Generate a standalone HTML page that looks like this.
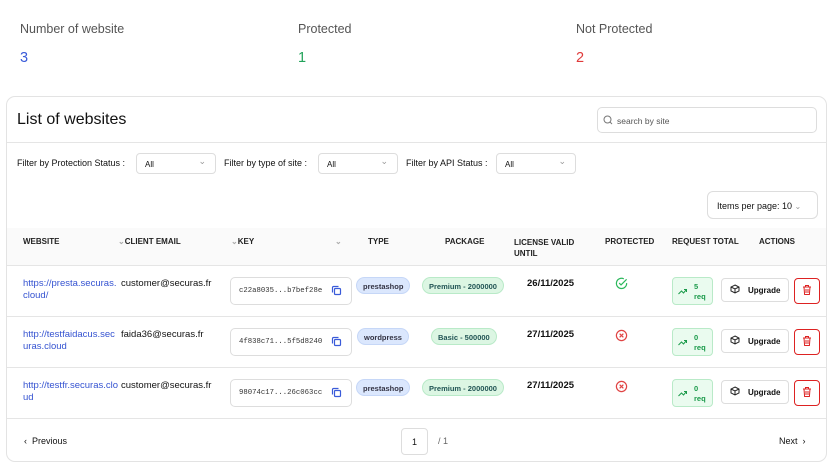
<!DOCTYPE html>
<html><head><meta charset="utf-8"><style>
*{box-sizing:border-box;margin:0;padding:0}
body{width:837px;height:468px;background:#fff;font-family:"Liberation Sans",sans-serif;color:#111;position:relative;overflow:hidden}
.a{position:absolute;white-space:nowrap}
.lbl{font-size:12.5px;color:#555}
.num{font-size:14.5px}
.card{position:absolute;left:6px;top:96px;width:821px;height:366px;border:1px solid #e3e3e3;border-radius:9px}
.sel{position:absolute;height:21px;border:1px solid #ddd;border-radius:4px;font-size:8px;padding:6px 8px}
.sel:after{content:"⌄";position:absolute;right:9px;top:2px;color:#999;font-size:9px}
.fl{font-size:9px}
.th{font-size:8px;font-weight:bold;color:#222}
.line{position:absolute;left:7px;width:819px;height:1px;background:#e5e5e5}
.link{font-size:9.5px;color:#3553d1;line-height:12px}
.em{font-size:9.5px;line-height:12px}
.key{position:absolute;left:230px;width:122px;height:28px;border:1px solid #ddd;border-radius:5px;font-family:"Liberation Mono",monospace;font-size:7.3px;padding:9px 0 0 8px;color:#333}
.pill{position:absolute;height:17px;border-radius:9px;font-size:7.5px;padding:4px 6px;font-weight:bold}
.blue{background:#dbe7fd;border:1px solid #c6d7f7;color:#334}
.green{background:#dcf6e3;border:1px solid #b9eac8;color:#255}
.date{font-size:9.5px;font-weight:bold}
.req{position:absolute;left:672px;width:41px;height:28px;background:#eafbef;border:1px solid #b9eac8;border-radius:4px;font-size:7px;color:#1a9a4a;font-weight:bold}
.up{position:absolute;left:721px;width:68px;height:24px;border:1px solid #ddd;border-radius:4px;font-size:8px;font-weight:bold;padding:7px 0 0 26px}
.del{position:absolute;left:794px;width:26px;height:26px;border:1.3px solid #d22;border-radius:4px}
</style></head><body>
<div class="a lbl" style="left:20px;top:22px">Number of website</div>
<div class="a num" style="left:20px;top:50px;color:#3a5bd9">3</div>
<div class="a lbl" style="left:298px;top:22px">Protected</div>
<div class="a num" style="left:298px;top:50px;color:#22a35a">1</div>
<div class="a lbl" style="left:576px;top:22px">Not Protected</div>
<div class="a num" style="left:576px;top:50px;color:#e03a3a">2</div>

<div class="card"></div>
<div class="a" style="left:17px;top:111px;font-size:16px;color:#111">List of websites</div>
<div class="a" style="left:597px;top:107px;width:220px;height:26px;border:1px solid #ddd;border-radius:5px;font-size:8.5px;color:#555;padding:8px 0 0 19px">search by site
<svg style="position:absolute;left:5px;top:7px" width="10" height="10" viewBox="0 0 10 10"><circle cx="4.5" cy="4.5" r="3.5" fill="none" stroke="#777" stroke-width="1"/><path d="M7 7l2 2" stroke="#777"/></svg></div>
<div class="line" style="top:142px"></div>

<div class="a fl" style="left:17px;top:158px">Filter by Protection Status :</div>
<div class="sel" style="left:136px;top:153px;width:80px">All</div>
<div class="a fl" style="left:224px;top:158px">Filter by type of site :</div>
<div class="sel" style="left:318px;top:153px;width:80px">All</div>
<div class="a fl" style="left:406px;top:158px">Filter by API Status :</div>
<div class="sel" style="left:496px;top:153px;width:80px">All</div>

<div class="a" style="left:707px;top:191px;width:111px;height:28px;border:1px solid #ddd;border-radius:6px;font-size:9px;padding:9px 0 0 9px">Items per page: 10 <span style="color:#999;font-size:8px">⌄</span></div>

<div class="a" style="left:7px;top:228px;width:819px;height:37px;background:#fafafa"></div>
<div class="a th" style="left:23px;top:237px">WEBSITE</div>
<div class="a th" style="left:118px;top:237px"><span style="color:#aaa">⌄</span>CLIENT EMAIL</div>
<div class="a th" style="left:231px;top:237px"><span style="color:#aaa">⌄</span>KEY</div>
<div class="a th" style="left:335px;top:237px;color:#aaa">⌄</div>
<div class="a th" style="left:368px;top:237px">TYPE</div>
<div class="a th" style="left:445px;top:237px">PACKAGE</div>
<div class="a th" style="left:514px;top:237px;line-height:11px">LICENSE VALID<br>UNTIL</div>
<div class="a th" style="left:605px;top:237px">PROTECTED</div>
<div class="a th" style="left:672px;top:237px">REQUEST TOTAL</div>
<div class="a th" style="left:759px;top:237px">ACTIONS</div>
<div class="line" style="top:265px"></div>
<div class="line" style="top:316px"></div>
<div class="line" style="top:367px"></div>
<div class="line" style="top:418px"></div>

<div class="a link" style="left:23px;top:278px">https://presta.securas.<br>cloud/</div>
<div class="a em" style="left:121px;top:278px">customer@securas.fr</div>
<div class="key" style="top:277px">c22a8035...b7bef28e</div>
<div class="pill blue" style="left:356px;top:277px">prestashop</div>
<div class="pill green" style="left:422px;top:277px">Premium - 2000000</div>
<div class="a date" style="left:527px;top:278px">26/11/2025</div>
<svg class="a" style="left:615px;top:277px" width="13" height="13" viewBox="0 0 14 14"><path d="M12.5 6.5A5.5 5.5 0 1 1 9.5 2" fill="none" stroke="#2cb85c" stroke-width="1.3"/><path d="M4.5 6.5l2 2 6-6" fill="none" stroke="#2cb85c" stroke-width="1.3"/></svg>
<div class="req" style="top:277px"></div>
<div class="up" style="top:278px">Upgrade</div>
<div class="del" style="top:278px"></div>

<div class="a link" style="left:23px;top:329px">http://testfaidacus.sec<br>uras.cloud</div>
<div class="a em" style="left:121px;top:329px">faida36@securas.fr</div>
<div class="key" style="top:328px">4f838c71...5f5d8240</div>
<div class="pill blue" style="left:357px;top:328px">wordpress</div>
<div class="pill green" style="left:431px;top:328px">Basic - 500000</div>
<div class="a date" style="left:527px;top:329px">27/11/2025</div>
<div class="req" style="top:328px"></div>
<div class="up" style="top:329px">Upgrade</div>
<div class="del" style="top:329px"></div>

<div class="a link" style="left:23px;top:380px">http://testfr.securas.clo<br>ud</div>
<div class="a em" style="left:121px;top:380px">customer@securas.fr</div>
<div class="key" style="top:379px">98074c17...26c063cc</div>
<div class="pill blue" style="left:356px;top:379px">prestashop</div>
<div class="pill green" style="left:422px;top:379px">Premium - 2000000</div>
<div class="a date" style="left:527px;top:380px">27/11/2025</div>
<div class="req" style="top:379px"></div>
<div class="up" style="top:380px">Upgrade</div>
<div class="del" style="top:380px"></div>

<div class="a" style="left:24px;top:436px;font-size:9px">‹ &nbsp;Previous</div>
<div class="a" style="left:401px;top:428px;width:27px;height:27px;border:1px solid #ddd;border-radius:4px;font-size:9px;text-align:center;padding-top:8px">1</div>
<div class="a" style="left:438px;top:436px;font-size:9px;color:#666">/ 1</div>
<div class="a" style="left:779px;top:436px;font-size:9px">Next &nbsp;›</div>

<script>
var tops=[277,328,379];
tops.forEach(function(t,i){
 var h='';
 h+='<svg class="a" style="left:331px;top:'+(t+8)+'px" width="11" height="11" viewBox="0 0 11 11"><rect x="3.5" y="3.5" width="6" height="6" rx="1" fill="none" stroke="#3a5bd9" stroke-width="1.2"/><path d="M1.5 7.5V2.5a1 1 0 0 1 1-1h5" fill="none" stroke="#3a5bd9" stroke-width="1.2"/></svg>';
 if(i>0) h+='<svg class="a" style="left:615px;top:'+(t+1)+'px" width="13" height="13" viewBox="0 0 14 14"><circle cx="7" cy="7" r="5.5" fill="none" stroke="#e04444" stroke-width="1.3"/><path d="M5 5l4 4M9 5l-4 4" stroke="#e04444" stroke-width="1.3"/></svg>';
 h+='<svg class="a" style="left:678px;top:'+(t+11)+'px" width="9" height="7" viewBox="0 0 9 7"><path d="M0.5 6l3-3 2 2 3-3.5M6 1.5h2.5V4" fill="none" stroke="#1a9a4a" stroke-width="1"/></svg>';
 h+='<div class="a" style="left:694px;top:'+(t+5)+'px;font-size:7.5px;color:#1a9a4a;font-weight:bold;line-height:10px">'+(i==0?'5':'0')+'<br>req</div>';
 h+='<svg class="a" style="left:730px;top:'+(t+7)+'px" width="10" height="10" viewBox="0 0 10 10"><path d="M5 1l4 2v4L5 9 1 7V3z M1 3l4 2 4-2M5 5v4" fill="none" stroke="#222" stroke-width="1"/></svg>';
 h+='<svg class="a" style="left:801px;top:'+(t+7)+'px" width="12" height="12" viewBox="0 0 12 12"><path d="M2 3h8M4.5 3V1.5h3V3M3 3l.6 7.5h4.8L9 3M5 5v4M7 5v4" fill="none" stroke="#d22" stroke-width="1"/></svg>';
 document.body.insertAdjacentHTML('beforeend',h);
});
</script>
</body></html>
